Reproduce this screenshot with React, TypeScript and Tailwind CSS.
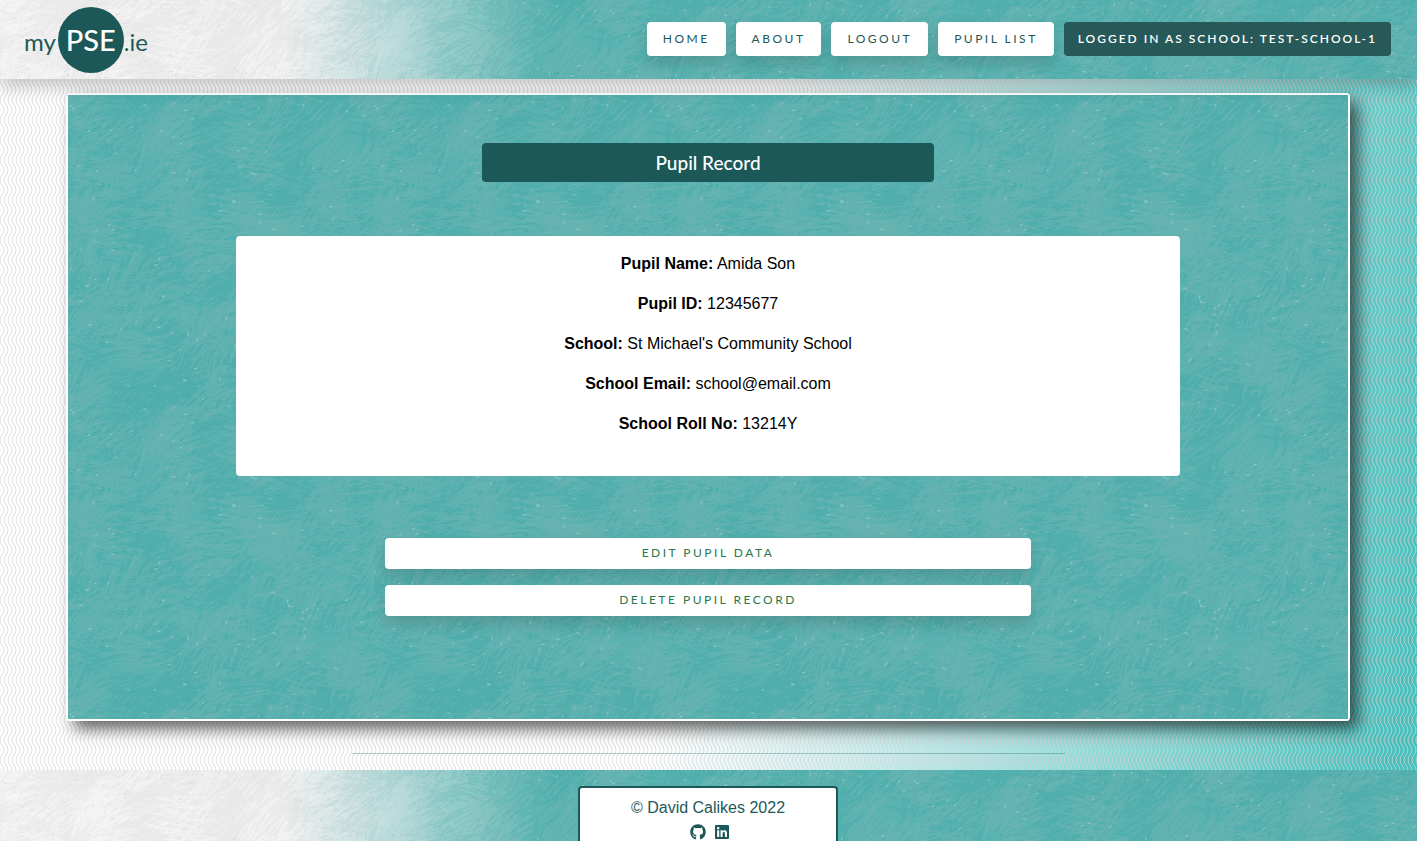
import { useId } from "react";
import { FaGithub, FaLinkedin } from "react-icons/fa";

const TILE = 304;

type Tone = "light" | "dark" | "fleck";

/* Crayon strokes: patches of short parallel lines, each patch with its own angle. */
function makeStrokes(): Record<Tone, string> {
  let state = 41;
  const random = () => {
    state = (state + 0x6d2b79f5) | 0;
    let t = Math.imul(state ^ (state >>> 15), 1 | state);
    t = (t + Math.imul(t ^ (t >>> 7), 61 | t)) ^ t;
    return ((t ^ (t >>> 14)) >>> 0) / 4294967296;
  };
  const out: Record<Tone, string> = { light: "", dark: "", fleck: "" };
  const add = (tone: Tone, x: number, y: number, dx: number, dy: number) => {
    for (const ox of [-TILE, 0, TILE]) {
      for (const oy of [-TILE, 0, TILE]) {
        const px = x + ox;
        const py = y + oy;
        if (px < -40 || py < -40 || px > TILE + 40 || py > TILE + 40) continue;
        out[tone] += `M${px.toFixed(1)} ${py.toFixed(1)}q${(dx / 2 + dy / 14).toFixed(1)} ${(dy / 2 - dx / 14).toFixed(1)} ${dx.toFixed(1)} ${dy.toFixed(1)}`;
      }
    }
  };
  for (let patch = 0; patch < 300; patch++) {
    const cx = random() * TILE;
    const cy = random() * TILE;
    const angle = -1.4 + random() * 1.7;
    const tone: Tone = patch % 2 ? "light" : "dark";
    for (let i = 0; i < 18; i++) {
      const length = 7 + random() * 20;
      const turn = angle + (random() - 0.5) * 0.2;
      const x = cx + (random() - 0.5) * 34;
      const y = cy + (random() - 0.5) * 34;
      add(tone, x, y, Math.cos(turn) * length, Math.sin(turn) * length);
      if (random() > 0.975) add("fleck", x, y, Math.cos(turn) * 3, Math.sin(turn) * 3);
    }
  }
  return out;
}

const strokes = makeStrokes();

function Texture({ tint }: { tint: "fade" | "solid" }) {
  const id = useId();
  const fade = tint === "fade";
  return (
    <svg aria-hidden="true" className="pointer-events-none absolute inset-0 -z-10 h-full w-full">
      <defs>
        <linearGradient id={`${id}g`}>
          <stop offset="0" stopColor="#eeeeee" />
          <stop offset="0.2" stopColor="#ebebeb" />
          <stop offset="0.27" stopColor="#bddbdb" />
          <stop offset="0.32" stopColor="#93ccca" />
          <stop offset="0.39" stopColor="#5bb3b1" />
          <stop offset="1" stopColor="#59b1b0" />
        </linearGradient>
        <linearGradient id={`${id}f`}>
          <stop offset="0.2" stopColor="#000" />
          <stop offset="0.39" stopColor="#fff" />
        </linearGradient>
        <linearGradient id={`${id}p`}>
          <stop offset="0.2" stopColor="#fff" />
          <stop offset="0.36" stopColor="#000" />
        </linearGradient>
        <mask id={`${id}m`}>
          <rect width="100%" height="100%" fill={fade ? `url(#${id}f)` : "#fff"} />
        </mask>
        <mask id={`${id}n`}>
          <rect width="100%" height="100%" fill={`url(#${id}p)`} />
        </mask>
        <pattern id={`${id}t`} width={TILE} height={TILE} patternUnits="userSpaceOnUse">
          <g fill="none" strokeWidth="1.5">
            <path d={strokes.dark} stroke="#3aa8a6" strokeOpacity="0.32" />
            <path d={strokes.light} stroke="#7fb8b6" strokeOpacity="0.36" strokeWidth="1.3" />
            <path d={strokes.fleck} stroke="#d3e3de" strokeOpacity="0.6" strokeWidth="0.8" />
          </g>
        </pattern>
        <pattern id={`${id}w`} width={TILE} height={TILE} patternUnits="userSpaceOnUse">
          <g fill="none" strokeWidth="1.3">
            <path d={strokes.light} stroke="#fff" strokeOpacity="0.4" />
            <path d={strokes.dark} stroke="#d8d8d8" strokeOpacity="0.15" />
            <path d={strokes.fleck} stroke="#bbb" strokeOpacity="0.5" strokeWidth="0.8" />
          </g>
        </pattern>
      </defs>
      <rect width="100%" height="100%" fill={fade ? `url(#${id}g)` : "#59b1b0"} />
      <g mask={`url(#${id}m)`}>
        <rect width="100%" height="100%" fill={`url(#${id}t)`} />
      </g>
      {fade && (
        <g mask={`url(#${id}n)`}>
          <rect width="100%" height="100%" fill={`url(#${id}w)`} />
        </g>
      )}
    </svg>
  );
}

function Waves() {
  return (
    <svg aria-hidden="true" className="pointer-events-none absolute inset-0 -z-20 h-full w-full">
      <defs>
        <pattern id="waves" width="4" height="20" patternUnits="userSpaceOnUse">
          <path
            d="M-4 0C-4 4 0 6 0 10S-4 16 -4 20M0 0C0 4 4 6 4 10S0 16 0 20M4 0C4 4 8 6 8 10S4 16 4 20"
            fill="none"
            stroke="#d3d3d3"
            strokeWidth="0.8"
          />
        </pattern>
      </defs>
      <rect width="100%" height="100%" fill="url(#waves)" />
    </svg>
  );
}

const links = ["Home", "About", "Logout", "Pupil List"];

const details = [
  ["Pupil Name:", "Amida Son"],
  ["Pupil ID:", "12345677"],
  ["School:", "St Michael's Community School"],
  ["School Email:", "school@email.com"],
  ["School Roll No:", "13214Y"],
];

const actions = ["Edit Pupil Data", "Delete Pupil Record"];

export default function App() {
  return (
    <div className="relative isolate flex h-screen flex-col overflow-hidden bg-[linear-gradient(100deg,#fff_50%,#46c0bd_98%)] font-['Liberation_Sans',Arial,sans-serif] text-base text-black">
      <Waves />
      <header className="relative isolate z-10 flex h-[79px] shrink-0 items-center justify-between pr-[26px] pl-6 shadow-[0_8px_16px_rgba(0,0,0,0.2)]">
        <Texture tint="fade" />
        <a href="#home" className="flex items-center pt-px font-['Lato',sans-serif] text-2xl text-[#1c5858]">
          <span className="pt-1 pr-0.5">my</span>
          <span className="flex size-[66px] items-center justify-center rounded-full bg-[#1c5858] text-[29px] font-medium text-white">
            PSE
          </span>
          <span className="pt-1">.ie</span>
        </a>
        <nav className="flex gap-2.5 pb-0.5 font-['Lato',sans-serif] text-xs leading-[18px] tracking-[2.5px] text-[#1c5858] uppercase">
          {links.map((label) => (
            <a
              key={label}
              href="#nav"
              className="rounded bg-white px-4 py-2 shadow-[0_8px_15px_rgba(0,0,0,0.15)]"
            >
              {label}
            </a>
          ))}
          <span className="rounded bg-[#265958] px-3.5 py-2 font-semibold tracking-[2px] text-white">
            Logged in as School: test-school-1
          </span>
        </nav>
      </header>

      <main className="flex shrink-0 flex-col items-center pt-3.5">
        <div className="w-full pr-[67px] pl-[66px]">
          <section className="relative isolate flex h-[628px] flex-col items-center rounded border-2 border-white pt-12 shadow-[8px_8px_16px_rgba(0,0,0,0.6)]">
            <Texture tint="solid" />
            <h1 className="w-[452px] rounded bg-[#1c5858] text-center font-['Lato',sans-serif] text-[19px] leading-[39px] font-medium text-white">
              Pupil Record
            </h1>
            <div className="mt-[54px] flex h-60 w-[944px] flex-col gap-4 rounded bg-white pt-4 text-center">
              {details.map(([name, value]) => (
                <p key={name}>
                  <strong>{name}</strong> {value}
                </p>
              ))}
            </div>
            <div className="mt-[62px] flex w-[646px] flex-col gap-4 font-['Lato',sans-serif] text-xs tracking-[2.5px] text-[#28794c]">
              {actions.map((label) => (
                <button
                  key={label}
                  type="button"
                  className="h-[31px] rounded bg-white pb-0.5 uppercase shadow-[0_8px_15px_rgba(0,0,0,0.15)]"
                >
                  {label}
                </button>
              ))}
            </div>
          </section>
        </div>
        <hr className="mt-8 mb-4 w-[713px] border-[#1c5858]/30" />
      </main>

      <footer className="relative isolate flex h-[110px] shrink-0 justify-center pt-4 pr-px">
        <Texture tint="fade" />
        <div className="h-[90px] w-[260px] rounded border-2 border-[#1c5858] bg-white pt-2 text-center text-[#1c5858]">
          <p>© David Calikes 2022</p>
          <div className="mt-1 flex justify-center gap-2 pl-1">
            <a href="#github" aria-label="GitHub">
              <FaGithub />
            </a>
            <a href="#linkedin" aria-label="LinkedIn">
              <FaLinkedin />
            </a>
          </div>
        </div>
      </footer>
    </div>
  );
}
